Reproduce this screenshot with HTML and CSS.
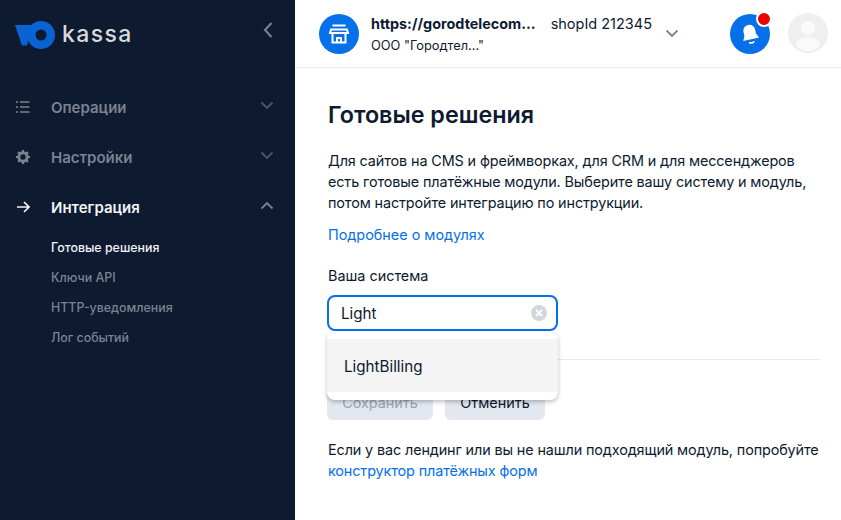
FILE: index.html
```html
<!DOCTYPE html>
<html lang="ru">
<head>
    <meta charset="UTF-8">
    <title>Готовые решения</title>
    <link rel="stylesheet" href="styles.css">
</head>
<body>
    <div class="sidebar">
        <div class="brand">
            <svg class="logo" width="40" height="28" viewBox="0 0 40 28">
                <path d="M0 4H18L12 24.500H7Z" fill="#0a63d3"/>
                <circle cx="26" cy="14" r="9.750" fill="none" stroke="#0a63d3" stroke-width="8.500"/>
            </svg>
            <span class="brand-name">kassa</span>
            <svg class="collapse" width="12" height="18" viewBox="0 0 12 18"><path d="M9.500 2L3 9l6.500 7" fill="none" stroke="#7b8290" stroke-width="2"/></svg>
        </div>
        <div class="menu">
            <div class="menu-item">
                <svg class="menu-icon" width="14" height="12" viewBox="0 0 14 12"><path d="M0 1h2M4 1h9.500M0 6h2M4 6h9.500M0 11h2M4 11h9.500" stroke="#7b8290" stroke-width="1.600"/></svg>
                <span class="menu-label">Операции</span>
                <svg class="menu-arrow" width="14" height="9" viewBox="0 0 14 9"><path d="M1.500 1.500L7 7l5.500-5.500" fill="none" stroke="#4d5666" stroke-width="1.800"/></svg>
            </div>
            <div class="menu-item">
                <svg class="menu-icon" width="14" height="14" viewBox="0 0 14 14"><circle cx="7" cy="7" r="4.200" fill="none" stroke="#7b8290" stroke-width="3"/><path d="M7 0v14M0 7h14M2 2l10 10M12 2L2 12" stroke="#7b8290" stroke-width="2.200" stroke-dasharray="2.200 9.600 2.200"/></svg>
                <span class="menu-label">Настройки</span>
                <svg class="menu-arrow" width="14" height="9" viewBox="0 0 14 9"><path d="M1.500 1.500L7 7l5.500-5.500" fill="none" stroke="#4d5666" stroke-width="1.800"/></svg>
            </div>
            <div class="menu-item active">
                <svg class="menu-icon" width="14" height="12" viewBox="0 0 14 12"><path d="M1 6h11.500M8 1l5 5-5 5" fill="none" stroke="#f2f3f5" stroke-width="1.700"/></svg>
                <span class="menu-label">Интеграция</span>
                <svg class="menu-arrow" width="14" height="9" viewBox="0 0 14 9"><path d="M1.500 7.500L7 2l5.500 5.500" fill="none" stroke="#7b8290" stroke-width="1.800"/></svg>
            </div>
            <div class="submenu">
                <div class="sub-item current">Готовые решения</div>
                <div class="sub-item">Ключи API</div>
                <div class="sub-item">HTTP-уведомления</div>
                <div class="sub-item">Лог событий</div>
            </div>
        </div>
    </div>

    <div class="main">
        <div class="header">
            <div class="shop-icon">
                <svg width="22" height="22" viewBox="0 0 22 22"><path d="M4.500 2.500h13M3 6.500h16l1 3.500H2zM4.500 10.500V19.500h13V10.500M9 19.500v-4.500h4v4.500" fill="none" stroke="#fff" stroke-width="2"/></svg>
            </div>
            <div class="shop-info">
                <div class="shop-top">
                    <span class="shop-url">https://gorodtelecom...</span>
                    <span class="shop-id">shopId 212345</span>
                </div>
                <div class="shop-org">ООО "Городтел..."</div>
            </div>
            <svg class="shop-arrow" width="14" height="9" viewBox="0 0 14 9"><path d="M1.500 1.500L7 7l5.500-5.500" fill="none" stroke="#7b8290" stroke-width="1.800"/></svg>
            <div class="bell">
                <svg width="26" height="26" viewBox="0 0 24 24"><g transform="rotate(-12 12 12)"><path d="M12 3.500c-3.500 0-5.500 2.500-5.500 6v3.500L4.500 17h15l-2-4V9.500c0-3.500-2-6-5.500-6z" fill="#fff"/><path d="M9.500 19.500a3 2 0 0 0 5 0" fill="none" stroke="#fff" stroke-width="1.500"/></g></svg>
                <span class="bell-dot"></span>
            </div>
            <div class="avatar">
                <svg width="40" height="40" viewBox="0 0 40 40"><circle cx="20" cy="15" r="7" fill="#fafafa"/><ellipse cx="20" cy="31" rx="12" ry="7" fill="#fafafa"/></svg>
            </div>
        </div>

        <div class="content">
            <h1>Готовые решения</h1>
            <p class="intro">Для сайтов на CMS и фреймворках, для CRM и для мессенджеров есть готовые платёжные модули. Выберите вашу систему и модуль, потом настройте интеграцию по инструкции.</p>
            <a class="link more" href="#">Подробнее о модулях</a>

            <label class="field-label">Ваша система</label>
            <div class="select">
                <div class="select-input">
                    <span>Light</span>
                    <svg width="16" height="16" viewBox="0 0 16 16"><circle cx="8" cy="8" r="8" fill="#d3d6da"/><path d="M5 5l6 6M11 5l-6 6" stroke="#fff" stroke-width="1.800"/></svg>
                </div>
                <div class="dropdown">
                    <div class="option">LightBilling</div>
                </div>
            </div>

            <div class="divider"></div>
            <div class="buttons">
                <button class="btn disabled">Сохранить</button>
                <button class="btn">Отменить</button>
            </div>
            <p class="note">Если у вас лендинг или вы не нашли подходящий модуль, попробуйте <a class="link" href="#">конструктор платёжных форм</a></p>
        </div>
    </div>
</body>
</html>
```

FILE: styles.css
```css
* {
    margin: 0;
    padding: 0;
    box-sizing: border-box;
}

body {
    display: flex;
    height: 520px;
    overflow: hidden;
    font-family: Inter, "Noto Sans", sans-serif;
    color: #0d1a30;
    background: white;
}

.sidebar {
    width: 295px;
    flex-shrink: 0;
    background-color: #0d1a30;
    padding: 20px 21px 0 15px;
}

.brand {
    display: flex;
    align-items: center;
    height: 28px;
}

.logo {
    margin-top: 2px;
}

.brand-name {
    margin-left: 7px;
    font-size: 23px;
    font-weight: 500;
    letter-spacing: 1.400px;
    color: #d8d9dc;
}

.collapse {
    margin-left: auto;
    margin-top: -8px;
}

.menu {
    margin-top: 34px;
}

.menu-item {
    display: flex;
    align-items: center;
    height: 50px;
    color: #7b8290;
    font-size: 15px;
    font-weight: 600;
}

.menu-item.active {
    color: #f2f3f5;
}

.menu-icon {
    margin-left: 1px;
}

.menu-label {
    margin-left: 21px;
}

.menu-arrow {
    margin-left: auto;
    margin-top: -4px;
}

.submenu {
    padding-top: 1px;
}

.sub-item {
    margin-left: 36px;
    height: 30px;
    line-height: 30px;
    font-size: 12.400px;
    font-weight: 500;
    color: #7b8290;
}

.sub-item.current {
    color: #f2f3f5;
}

.main {
    flex: 1;
    min-width: 0;
}

.header {
    display: flex;
    align-items: center;
    height: 68px;
    padding: 0 12px 0 24px;
    border-bottom: 1px solid #e8e9eb;
}

.shop-icon {
    display: flex;
    align-items: center;
    justify-content: center;
    width: 40px;
    height: 40px;
    border-radius: 50%;
    background-color: #0670eb;
}

.shop-info {
    margin-left: 12px;
    padding-top: 2px;
    width: 281px;
}

.shop-top {
    display: flex;
    justify-content: space-between;
    font-size: 14px;
    line-height: 20px;
}

.shop-url {
    font-size: 14.400px;
    font-weight: 700;
}

.shop-id {
    font-size: 14.500px;
}

.shop-org {
    margin-top: 3px;
    font-size: 12.800px;
    line-height: 18px;
}

.shop-arrow {
    margin-left: 13px;
}

.bell {
    position: relative;
    display: flex;
    align-items: center;
    justify-content: center;
    width: 40px;
    height: 40px;
    margin-left: 51px;
    border-radius: 50%;
    background-color: #0670eb;
}

.bell-dot {
    position: absolute;
    top: -3px;
    right: -2px;
    width: 16px;
    height: 16px;
    border: 2px solid white;
    border-radius: 50%;
    background-color: #ee0000;
}

.avatar {
    width: 40px;
    height: 40px;
    margin-left: 18px;
    margin-top: -2px;
    border-radius: 50%;
    background-color: #efefef;
}

.content {
    padding: 32px 21px 0 33px;
}

h1 {
    font-size: 23.300px;
    line-height: 30px;
    font-weight: 600;
    margin-bottom: 20px;
}

.intro {
    font-size: 14.400px;
    letter-spacing: -0.120px;
    line-height: 21px;
    width: 490px;
}

.link {
    color: #0670eb;
    text-decoration: none;
}

.more {
    display: block;
    margin-top: 11px;
    font-size: 14.400px;
    line-height: 22px;
}

.field-label {
    display: block;
    margin-top: 19px;
    font-size: 14.400px;
    line-height: 22px;
}

.select {
    position: relative;
    width: 231px;
    margin-left: -1px;
    margin-top: 8px;
}

.select-input {
    display: flex;
    align-items: center;
    justify-content: space-between;
    height: 36px;
    padding: 0 9px 0 12px;
    border: 2px solid #0670eb;
    border-radius: 8px;
    font-size: 15.200px;
}

.dropdown {
    position: absolute;
    top: 37px;
    left: 0;
    right: 0;
    padding: 7px 0 8px;
    background: white;
    border-radius: 8px;
    box-shadow: 0 2px 4px rgba(0,0,0,0.25);
}

.option {
    height: 53px;
    line-height: 55px;
    padding-left: 17px;
    font-size: 15.200px;
    background-color: #f4f4f4;
}

.divider {
    margin-top: 28px;
    border-top: 1px solid #e8e9eb;
}

.buttons {
    display: flex;
    gap: 12px;
    margin-top: 24px;
    margin-left: -1px;
}

.btn {
    width: 106px;
    height: 36px;
    border: none;
    border-radius: 6px;
    font-family: inherit;
    font-size: 14.400px;
    color: #0d1a30;
    background-color: #e3e7ef;
}

.btn + .btn {
    width: 100px;
}

.btn.disabled {
    color: #9ba3b0;
}

.note {
    margin-top: 19px;
    margin-right: -15px;
    font-size: 14.400px;
    letter-spacing: -0.120px;
    line-height: 21px;
}
```
